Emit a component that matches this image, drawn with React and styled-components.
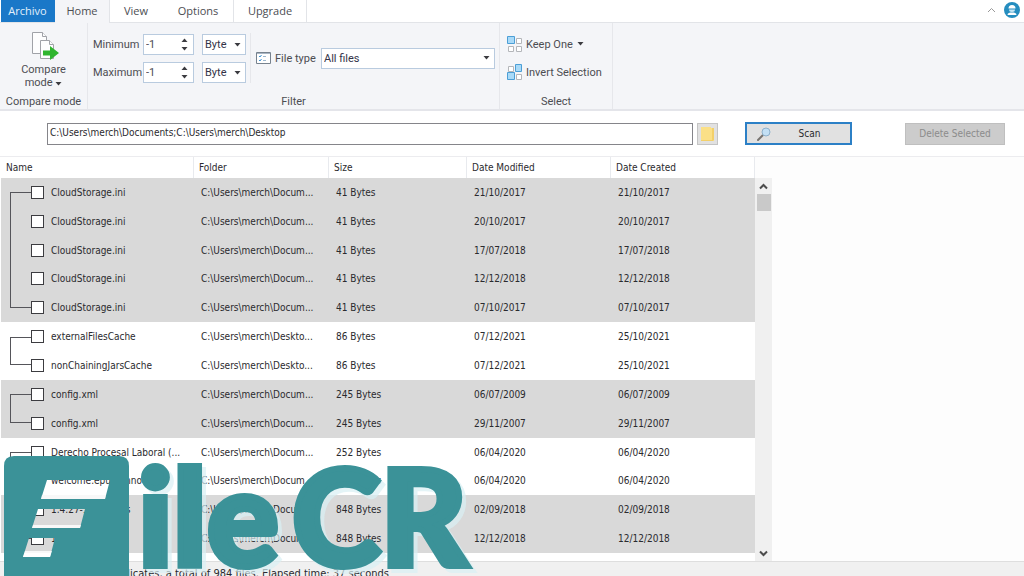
import styled, { createGlobalStyle } from "styled-components";

const GlobalStyle = createGlobalStyle`
  * {
    box-sizing: border-box;
  }
  body {
    margin: 0;
    background: #fdfdfd;
  }
  button,
  input,
  select {
    font: inherit;
    color: inherit;
    margin: 0;
    padding: 0;
  }
`;

const Window = styled.div`
  position: relative;
  display: flex;
  flex-direction: column;
  height: 100vh;
  overflow: hidden;
  font-family: "DejaVu Sans Condensed", "DejaVu Sans", sans-serif;
  font-size: 10px;
  color: #2a2a2e;
`;

/* ribbon */
const Tabs = styled.nav`
  display: flex;
  flex-shrink: 0;
  height: 23px;
  padding-left: 1px;
  border-bottom: 1px solid #e2e4e8;
  background: #fff;
  font-family: "Open Sans", "Noto Sans", sans-serif;
  font-size: 11px;
`;
const Tab = styled.button`
  width: ${(p) => p.$width}px;
  height: 23px;
  padding-bottom: 2px;
  border: none;
  border-right: 1px solid ${(p) => (p.$line ? "#e2e4e8" : "transparent")};
  background: ${(p) => (p.$active ? "#f4f5f8" : "transparent")};
  color: #4c4d52;
`;
const FileTab = styled(Tab)`
  height: 22px;
  background: #1a78c8;
  color: #e3f0fb;
`;
const TabsEnd = styled.div`
  display: flex;
  align-items: center;
  gap: 8px;
  margin-left: auto;
  padding: 0 4px 2px 0;
`;
const IconButton = styled.button`
  display: flex;
  border: none;
  background: none;
`;
const Ribbon = styled.div`
  display: flex;
  flex-shrink: 0;
  height: 88px;
  border-bottom: 2px solid #e4e5ea;
  background: #f4f5f8;
  font-family: Roboto, "Open Sans", sans-serif;
  font-size: 11px;
  line-height: 13px;
  color: #4c4d52;
`;
const Group = styled.section`
  display: flex;
  flex-direction: column;
  width: ${(p) => p.$width}px;
  border-right: 1px solid #e6e7eb;
`;
const GroupBody = styled.div`
  display: flex;
  flex: 1;
`;
const GroupTitle = styled.div`
  height: 14px;
  text-align: center;
`;
const CompareButton = styled.button`
  display: flex;
  flex-direction: column;
  align-items: center;
  width: 100%;
  padding-top: 8px;
  border: none;
  background: none;
`;
const Ranges = styled.div`
  display: flex;
  flex-direction: column;
  gap: 7px;
  width: 162px;
  height: 61px;
  padding: 11px 0 0 5px;
`;
const RangeRow = styled.div`
  display: flex;
  align-items: center;
`;
const RangeLabel = styled.label`
  width: 50px;
`;
const Spinner = styled.div`
  display: flex;
  width: 51px;
  height: 21px;
  margin-right: 8px;
  border: 1px solid #b9cbdf;
  background: #fff;
`;
const SpinInput = styled.input`
  flex: 1;
  min-width: 0;
  padding-left: 2px;
  border: none;
  outline: none;
  background: none;
`;
const SpinButtons = styled.div`
  display: flex;
  flex-direction: column;
  justify-content: space-around;
  width: 12px;
`;
const SelectBox = styled.div`
  display: grid;
  align-items: center;
  width: ${(p) => p.$width}px;
  height: 21px;
  border: 1px solid #b9cbdf;
  background: #fff;
  color: #333348;

  select,
  svg {
    grid-area: 1 / 1;
  }
  svg {
    justify-self: end;
    margin-right: 4px;
    pointer-events: none;
  }
`;
const Select = styled.select`
  width: 100%;
  height: 19px;
  padding-left: 2px;
  border: none;
  outline: none;
  appearance: none;
  background: none;
`;
const FileType = styled.div`
  display: flex;
  align-items: center;
  height: 50px;
  margin-top: 10px;
  padding-left: 5px;
  border-left: 1px solid #e6e7eb;

  label {
    width: 46px;
    margin-left: 4px;
    white-space: nowrap;
  }
`;
const Actions = styled.div`
  display: flex;
  flex-direction: column;
  gap: 12px;
  padding: 13px 0 0 7px;
`;
const Action = styled.button`
  display: flex;
  align-items: center;
  gap: 4px;
  height: 16px;
  border: none;
  background: none;
  white-space: nowrap;
`;

/* search bar */
const SearchBar = styled.form`
  display: flex;
  align-items: center;
  flex-shrink: 0;
  height: 45px;
  padding: 0 19px 0 47px;
  background: #fff;
`;
const PathInput = styled.input`
  flex: 1;
  min-width: 0;
  height: 22px;
  padding: 0 2px 3px;
  border: 1px solid #85858a;
  outline: none;
  background: #fff;
`;
const FolderButton = styled.button`
  display: flex;
  align-items: center;
  justify-content: center;
  width: 21px;
  height: 22px;
  margin: 0 27px 0 4px;
  border: 1px solid #c4c4c4;
  background: #e1e1e1;
`;
const ScanButton = styled.button`
  display: flex;
  align-items: center;
  width: 107px;
  height: 23px;
  margin-right: 53px;
  padding: 0 10px;
  border: 2px solid #2c80c6;
  background: #e1e1e1;

  span {
    flex: 1;
    padding-left: 8px;
    text-align: center;
  }
`;
const DeleteButton = styled.button`
  width: 100px;
  height: 22px;
  border: 1px solid #bfbfbf;
  background: #cccccc;
  color: #8b8b8b;
`;

/* results */
const Results = styled.main`
  display: flex;
  flex-shrink: 0;
  height: 405px;
  border-top: 1px solid #ececef;
`;
const List = styled.div`
  flex: 0 1 755px;
  padding-left: 1px;
  background: #fff;
`;
const Table = styled.table`
  width: 100%;
  height: 396px;
  border-collapse: separate;
  border-spacing: 0;
  table-layout: fixed;
`;
const HeadCell = styled.th`
  width: ${(p) => p.$width};
  height: 21px;
  padding: 0 0 0 5px;
  border-right: 1px solid #e8eaee;
  font-weight: normal;
  text-align: left;
`;
const Row = styled.tr`
  background: ${(p) => (p.$shaded ? "#d9d9d9" : "#fff")};
`;
const Cell = styled.td`
  padding: 0 0 0 7px;
  white-space: nowrap;
  overflow: hidden;
`;
const NameCell = styled(Cell)`
  position: relative;
  padding-left: 30px;

  &::before {
    content: "";
    position: absolute;
    left: 9px;
    width: 20px;
    top: ${(p) => (p.$place === "first" ? "50%" : "0")};
    bottom: ${(p) => (p.$place === "last" ? "50%" : "0")};
    border: 0 solid #55555a;
    border-left-width: 1px;
    border-top-width: ${(p) => (p.$place === "first" ? "1px" : "0")};
    border-bottom-width: ${(p) => (p.$place === "last" ? "1px" : "0")};
  }
`;
const FileLabel = styled.label`
  display: flex;
  align-items: center;
  gap: 7px;
`;
const Check = styled.input`
  width: 13px;
  height: 13px;
  border: 1px solid #3c3c40;
  appearance: none;
  background: #fff;
`;
const ScrollBar = styled.div`
  display: flex;
  flex-direction: column;
  align-items: center;
  width: 17px;
  margin-top: 21px;
  padding: 5px 0 4px;
  background: #f0f0f0;
`;
const Thumb = styled.div`
  width: 14px;
  height: 17px;
  margin: 4px 0 auto;
  background: #c9c9c9;
`;
const StatusBar = styled.footer`
  flex-shrink: 0;
  height: 24px;
  padding-left: 5px;
  border-top: 1px solid #dedede;
  background: #f0f0f0;
  font-size: 11px;
  line-height: 23px;
`;
const Watermark = styled.svg`
  position: absolute;
  left: 0;
  bottom: 0;
  fill: #3b9298;
  pointer-events: none;
`;
const WatermarkText = styled.text`
  font-family: Lato, sans-serif;
  font-size: 134px;
  font-weight: 900;
  stroke: #3b9298;
  stroke-width: 6px;
  filter: drop-shadow(4px 4px 0 rgba(216, 240, 243, 0.7));
`;

const Arrow = ({ up }) => (
  <svg width="7" height="4" viewBox="0 0 7 4">
    <path d={up ? "M.5 4 3.5 .5 6.5 4z" : "M.5 0 3.5 3.5 6.5 0z"} fill="#3b3b40" />
  </svg>
);

const ScrollArrow = ({ down }) => (
  <svg width="9" height="7" viewBox="0 0 9 7">
    <path
      d={down ? "M1 1.5 4.5 5 8 1.5" : "M1 5.5 4.5 2 8 5.5"}
      fill="none"
      stroke="#4c4c4c"
      strokeWidth="2"
    />
  </svg>
);

const CompareIcon = () => (
  <svg width="30" height="32" viewBox="0 0 30 32">
    <g fill="#fdfdfe" stroke="#a0a2a8">
      <path d="M3.5 1.5h10l4 4v17h-14z" />
      <path d="M13.5 1.5v4h4" />
      <path d="M11.500 9.500h9l4 4v14h-13z" />
      <path d="M20.500 9.500v4h4" />
    </g>
    <path d="M14 19.500h7v-4.500l9 7-9 7v-4.500h-7z" fill="#2fb52f" />
  </svg>
);

const ListIcon = () => (
  <svg width="15" height="12" viewBox="0 0 15 12">
    <path d="M.5.5h14v11H.5z" fill="#fff" stroke="#77828e" />
    <path d="M1 1.500h13" stroke="#a9b6c4" />
    <path d="M3 4l1 1 1.500-2M3 8l1 1 1.500-2" fill="none" stroke="#3f94d4" />
    <path d="M7 4.500h3M7 8.500h3" stroke="#9db8cf" />
  </svg>
);

const SquaresIcon = ({ invert }) => (
  <svg width="15" height="16" viewBox="0 0 15 16">
    <g fill="#fff" stroke="#b4b6ba">
      <path d={invert ? "M1.500 2.500h5v5h-5z" : "M9.500 2.500h5v5h-5z"} />
      <path d="M9.500 10.500h5v5h-5z" />
      {!invert && <path d="M1.500 10.500h5v5h-5z" />}
    </g>
    <g fill="#a9daf8" stroke="#4c9fd6">
      {invert ? (
        <path d="M8.500.5h6v7h-6zM.5 8.500h7v7h-7z" />
      ) : (
        <path d="M.5.5h7v7h-7z" />
      )}
    </g>
  </svg>
);

const UserIcon = () => (
  <svg width="16" height="16" viewBox="0 0 16 16">
    <circle cx="8" cy="8" r="8" fill="#258dbf" />
    <path d="M4.500 6.500a3.500 3.500 0 0 1 7 0z" fill="#fff" />
    <path d="M5 7.500h6a3 2.500 0 0 1-6 0z" fill="#c5e6f5" />
    <path d="M3.500 13c0-2 2-2.500 4.500-2.500s4.500.5 4.500 2.500z" fill="#fff" />
  </svg>
);

const FolderIcon = () => (
  <svg width="13" height="16" viewBox="0 0 13 16">
    <path d="M0 1h10v1h3v13H0z" fill="#fbe087" />
    <path d="M11 2h2v12l-2 1z" fill="#f3d06a" />
    <path d="M0 14.500h12" stroke="#f3d06a" />
  </svg>
);

const LensIcon = () => (
  <svg width="14" height="14" viewBox="0 0 14 14">
    <path d="M1 13l5-5" stroke="#77736f" strokeWidth="2" strokeLinecap="round" />
    <circle cx="9" cy="5" r="4" fill="#c3e0f5" stroke="#8fb1cc" />
  </svg>
);

const groups = [
  {
    shaded: true,
    files: [
      ["CloudStorage.ini", "C:\\Users\\merch\\Docum...", "41 Bytes", "21/10/2017", "21/10/2017"],
      ["CloudStorage.ini", "C:\\Users\\merch\\Docum...", "41 Bytes", "20/10/2017", "20/10/2017"],
      ["CloudStorage.ini", "C:\\Users\\merch\\Docum...", "41 Bytes", "17/07/2018", "17/07/2018"],
      ["CloudStorage.ini", "C:\\Users\\merch\\Docum...", "41 Bytes", "12/12/2018", "12/12/2018"],
      ["CloudStorage.ini", "C:\\Users\\merch\\Docum...", "41 Bytes", "07/10/2017", "07/10/2017"],
    ],
  },
  {
    files: [
      ["externalFilesCache", "C:\\Users\\merch\\Deskto...", "86 Bytes", "07/12/2021", "25/10/2021"],
      ["nonChainingJarsCache", "C:\\Users\\merch\\Deskto...", "86 Bytes", "07/12/2021", "25/10/2021"],
    ],
  },
  {
    shaded: true,
    files: [
      ["config.xml", "C:\\Users\\merch\\Docum...", "245 Bytes", "06/07/2009", "06/07/2009"],
      ["config.xml", "C:\\Users\\merch\\Docum...", "245 Bytes", "29/11/2007", "29/11/2007"],
    ],
  },
  {
    files: [
      ["Derecho Procesal Laboral (...", "C:\\Users\\merch\\Docum...", "252 Bytes", "06/04/2020", "06/04/2020"],
      ["welcome.epub.anno", "C:\\Users\\merch\\Docum...", "252 Bytes", "06/04/2020", "06/04/2020"],
    ],
  },
  {
    shaded: true,
    files: [
      ["1.4.27-1.0.0.0.2.s", "C:\\Users\\merch\\Docum...", "848 Bytes", "02/09/2018", "02/09/2018"],
      ["1.4.27-1.0.0.0.02", "C:\\Users\\merch\\Docum...", "848 Bytes", "12/12/2018", "12/12/2018"],
    ],
  },
];

const columns = [
  ["Name", "193px"],
  ["Folder", "135px"],
  ["Size", "138px"],
  ["Date Modified", "144px"],
  ["Date Created", "auto"],
];

const getPlace = (index, count) => {
  if (index === 0) return "first";
  return index === count - 1 ? "last" : "middle";
};

const Range = ({ id, label }) => (
  <RangeRow>
    <RangeLabel htmlFor={id}>{label}</RangeLabel>
    <Spinner>
      <SpinInput id={id} defaultValue="-1" />
      <SpinButtons>
        <IconButton type="button" aria-label={`Increase ${label}`}>
          <Arrow up />
        </IconButton>
        <IconButton type="button" aria-label={`Decrease ${label}`}>
          <Arrow />
        </IconButton>
      </SpinButtons>
    </Spinner>
    <SelectBox $width={44}>
      <Select aria-label={`${label} unit`}>
        <option>Byte</option>
      </Select>
      <Arrow />
    </SelectBox>
  </RangeRow>
);

const App = () => {
  return (
    <>
      <GlobalStyle />
      <Window>
        <Tabs>
          <FileTab $width={54}>Archivo</FileTab>
          <Tab $width={55} $active $line>
            Home
          </Tab>
          <Tab $width={53}>View</Tab>
          <Tab $width={71} $line>
            Options
          </Tab>
          <Tab $width={73} $line>
            Upgrade
          </Tab>
          <TabsEnd>
            <IconButton aria-label="Collapse ribbon">
              <svg width="9" height="6" viewBox="0 0 9 6">
                <path d="M1 5 4.500 1.500 8 5" fill="none" stroke="#999" />
              </svg>
            </IconButton>
            <IconButton aria-label="Account">
              <UserIcon />
            </IconButton>
          </TabsEnd>
        </Tabs>

        <Ribbon>
          <Group $width={88}>
            <GroupBody>
              <CompareButton>
                <CompareIcon />
                <span>Compare</span>
                <span>
                  mode <Arrow />
                </span>
              </CompareButton>
            </GroupBody>
            <GroupTitle>Compare mode</GroupTitle>
          </Group>
          <Group $width={412}>
            <GroupBody>
              <Ranges>
                <Range id="minimum" label="Minimum" />
                <Range id="maximum" label="Maximum" />
              </Ranges>
              <FileType>
                <ListIcon />
                <label htmlFor="file-type">File type</label>
                <SelectBox $width={174}>
                  <Select id="file-type">
                    <option>All files</option>
                  </Select>
                  <Arrow />
                </SelectBox>
              </FileType>
            </GroupBody>
            <GroupTitle>Filter</GroupTitle>
          </Group>
          <Group $width={113}>
            <GroupBody>
              <Actions>
                <Action>
                  <SquaresIcon />
                  Keep One
                  <Arrow />
                </Action>
                <Action>
                  <SquaresIcon invert />
                  Invert Selection
                </Action>
              </Actions>
            </GroupBody>
            <GroupTitle>Select</GroupTitle>
          </Group>
        </Ribbon>

        <SearchBar onSubmit={(e) => e.preventDefault()}>
          <PathInput
            aria-label="Folders to scan"
            defaultValue="C:\Users\merch\Documents;C:\Users\merch\Desktop"
          />
          <FolderButton type="button" aria-label="Choose folder">
            <FolderIcon />
          </FolderButton>
          <ScanButton>
            <LensIcon />
            <span>Scan</span>
          </ScanButton>
          <DeleteButton type="button" disabled>
            Delete Selected
          </DeleteButton>
        </SearchBar>

        <Results>
          <List>
            <Table>
              <thead>
                <tr>
                  {columns.map(([title, width]) => (
                    <HeadCell key={title} $width={width}>
                      {title}
                    </HeadCell>
                  ))}
                </tr>
              </thead>
              <tbody>
                {groups.map((group, g) =>
                  group.files.map(([name, ...rest], i) => (
                    <Row key={`${g}-${i}`} $shaded={group.shaded}>
                      <NameCell $place={getPlace(i, group.files.length)}>
                        <FileLabel>
                          <Check type="checkbox" />
                          {name}
                        </FileLabel>
                      </NameCell>
                      {rest.map((value, c) => (
                        <Cell key={c}>{value}</Cell>
                      ))}
                    </Row>
                  ))
                )}
              </tbody>
            </Table>
          </List>
          <ScrollBar>
            <ScrollArrow />
            <Thumb />
            <ScrollArrow down />
          </ScrollBar>
        </Results>

        <StatusBar>
          Found 12650 files in duplicates, a total of 984 files. Elapsed time: 37 seconds
        </StatusBar>

        <Watermark width="490" height="126" viewBox="0 450 490 126">
          <path
            fillRule="evenodd"
            d="M14 456h105q10 0 10 10v110H4V466q0-10 10-10z
              M47 480 41 499h64l5-19z
              M38 509 32 528h48l5-19z
              M29 538 23 557h27l5-19z"
          />
          <path
            fill="#fff"
            fillOpacity="0.8"
            d="M42 495 41 499h64l1-4zM33 525 32 528h48l1-3zM25 551 23 557h27l2-6z"
          />
          <WatermarkText x="138" y="566">
            ile
          </WatermarkText>
          <WatermarkText x="292" y="566">
            CR
          </WatermarkText>
        </Watermark>
      </Window>
    </>
  );
};

export default App;
